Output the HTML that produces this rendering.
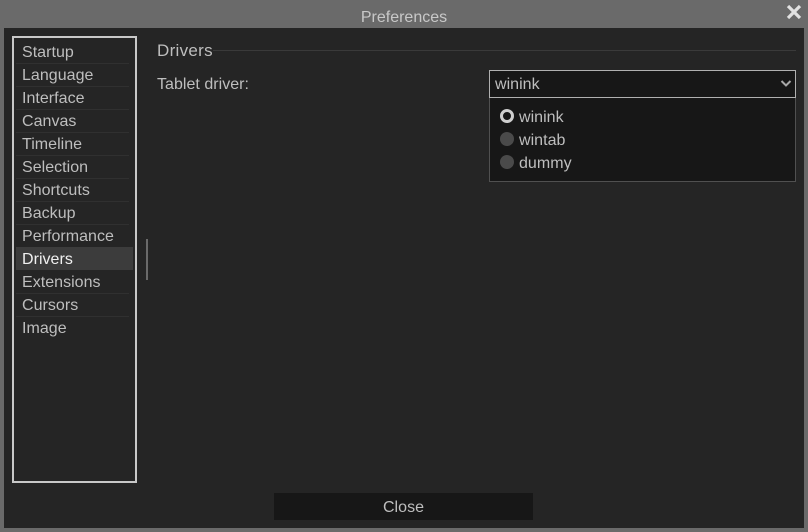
<!DOCTYPE html>
<html><head><meta charset="utf-8">
<style>
html,body{margin:0;padding:0;width:808px;height:532px;overflow:hidden;background:#6a6a6a;font-family:"Liberation Sans",sans-serif;font-size:16px;color:#bebebe}
div{position:absolute;box-sizing:border-box;white-space:nowrap}
.t{line-height:23px;height:23px;letter-spacing:.03px}
.sep{height:1px;background:#303030;left:16px;width:113px}
</style></head>
<body>
<div style="left:4px;top:28px;width:800px;height:500px;background:#252525"></div>
<div class="t" style="left:0;width:808px;top:6px;text-align:center;color:#c8c8c8;letter-spacing:0">Preferences</div>
<svg style="position:absolute;left:786px;top:4px" width="16" height="16" viewBox="0 0 16 16"><path d="M2 2L14 14M14 2L2 14" stroke="#e2e2e2" stroke-width="3.2" fill="none"/></svg>

<div style="left:12px;top:36px;width:125px;height:447px;border:2px solid #c8c8c8"></div>
<div class="t" style="left:22px;top:41px">Startup</div>
<div class="sep" style="top:63px"></div>
<div class="t" style="left:22px;top:64px">Language</div>
<div class="sep" style="top:86px"></div>
<div class="t" style="left:22px;top:87px">Interface</div>
<div class="sep" style="top:109px"></div>
<div class="t" style="left:22px;top:110px">Canvas</div>
<div class="sep" style="top:132px"></div>
<div class="t" style="left:22px;top:133px">Timeline</div>
<div class="sep" style="top:155px"></div>
<div class="t" style="left:22px;top:156px">Selection</div>
<div class="sep" style="top:178px"></div>
<div class="t" style="left:22px;top:179px">Shortcuts</div>
<div class="sep" style="top:201px"></div>
<div class="t" style="left:22px;top:202px">Backup</div>
<div class="sep" style="top:224px"></div>
<div class="t" style="left:22px;top:225px">Performance</div>
<div style="left:16px;top:247px;width:117px;height:23px;background:#3c3c3c"></div>
<div class="t" style="left:22px;top:248px;color:#f0f0f0">Drivers</div>
<div class="t" style="left:22px;top:271px">Extensions</div>
<div class="sep" style="top:293px"></div>
<div class="t" style="left:22px;top:294px">Cursors</div>
<div class="sep" style="top:316px"></div>
<div class="t" style="left:22px;top:317px">Image</div>

<div style="left:146px;top:239px;width:2px;height:41px;background:#6a6a6a"></div>

<div class="t" style="left:157px;top:39px;font-size:17px;letter-spacing:.3px">Drivers</div>
<div style="left:213px;top:50px;width:583px;height:1px;background:#3a3a3a"></div>
<div class="t" style="left:157px;top:73px">Tablet driver:</div>

<div style="left:489px;top:97px;width:307px;height:85px;background:#171717;border:1px solid #505050;border-top:none"></div>
<div style="left:489px;top:70px;width:307px;height:28px;background:#171717;border:1px solid #b0b0b0"></div>
<div class="t" style="left:495px;top:73px">winink</div>
<svg style="position:absolute;left:780px;top:79px" width="12" height="9" viewBox="0 0 12 9"><path d="M1.5 2L6 6.5L10.5 2" stroke="#a8a8a8" stroke-width="2" fill="none"/></svg>

<div style="left:500px;top:109px;width:14px;height:14px;border-radius:50%;border:3.5px solid #cfcfcf;background:#171717"></div>
<div class="t" style="left:519px;top:106px">winink</div>
<div style="left:500px;top:132px;width:14px;height:14px;border-radius:50%;background:#4a4a4a"></div>
<div class="t" style="left:519px;top:129px">wintab</div>
<div style="left:500px;top:155px;width:14px;height:14px;border-radius:50%;background:#4a4a4a"></div>
<div class="t" style="left:519px;top:152px">dummy</div>

<div style="left:274px;top:493px;width:259px;height:27px;background:#171717"></div>
<div class="t" style="left:274px;width:259px;top:496px;text-align:center">Close</div>
</body></html>
